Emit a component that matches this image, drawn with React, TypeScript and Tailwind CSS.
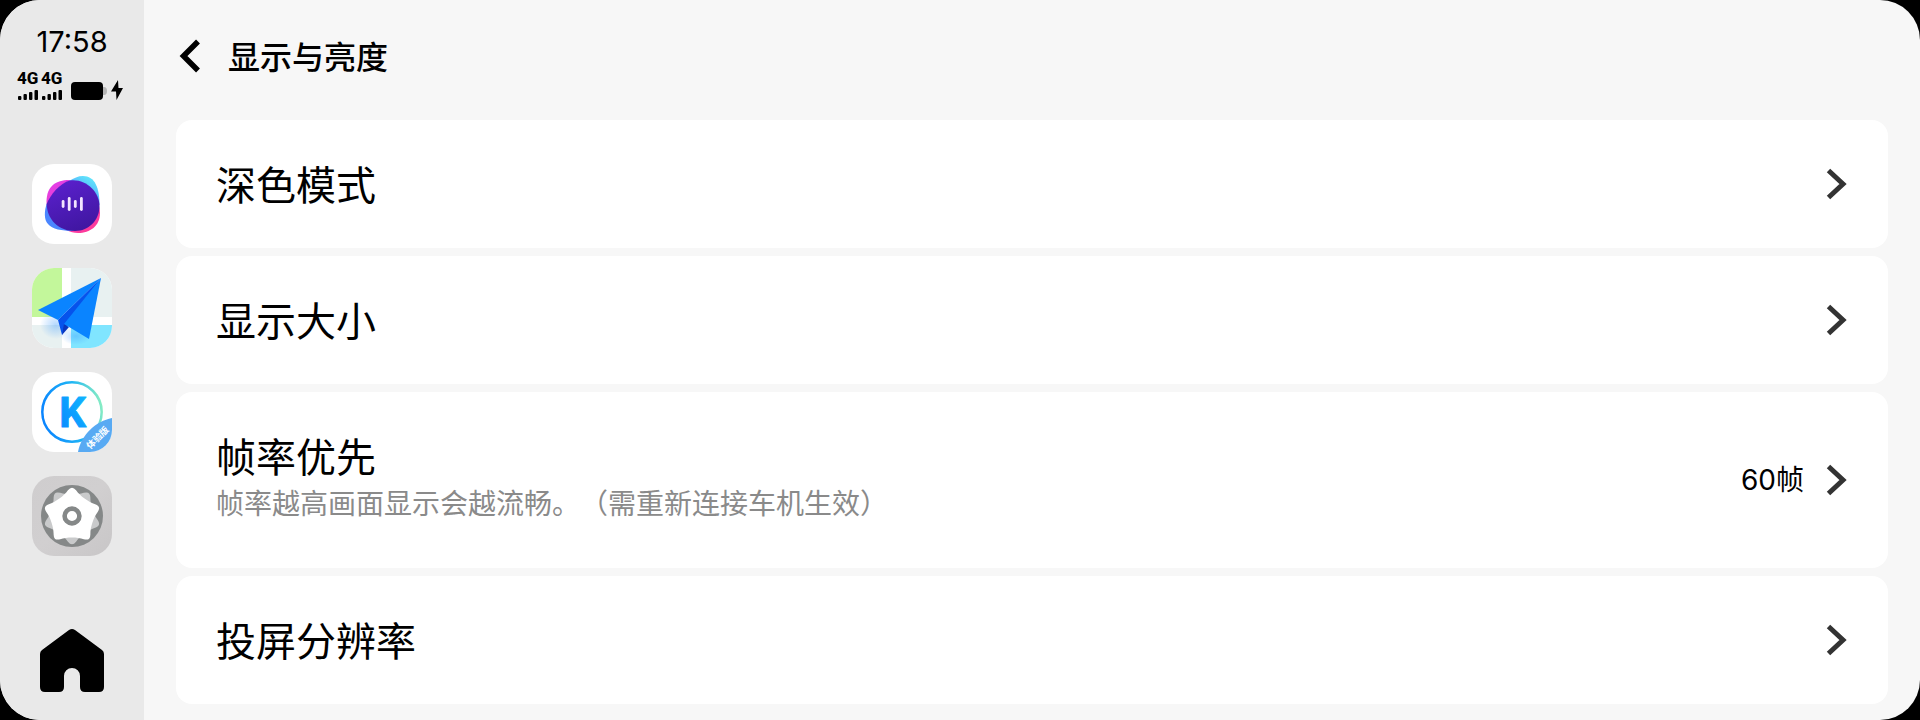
import React from "react";

const polar = (r: number, deg: number) => {
  const a = (deg * Math.PI) / 180;
  return `${(40 + r * Math.cos(a)).toFixed(2)} ${(40 + r * Math.sin(a)).toFixed(2)}`;
};

// five soft points joined by slightly hollow sides
const gearPath = (start: number) => {
  let d = `M${polar(26, start - 9)}`;
  for (let i = 0; i < 5; i++) {
    const a = start + i * 72;
    d += `Q${polar(31, a)} ${polar(26, a + 9)}`;
    d += `C${polar(21.5, a + 22)} ${polar(21.5, a + 50)} ${polar(26, a + 63)}`;
  }
  return d + "Z";
};

const VoiceIcon = () => (
  <svg viewBox="0 0 80 80" className="size-20" aria-hidden="true">
    <defs>
      <linearGradient id="voice-cyan" x1="0.8" y1="0" x2="0.2" y2="1">
        <stop offset="0" stopColor="#62effa" />
        <stop offset="1" stopColor="#4b7dff" />
      </linearGradient>
      <linearGradient id="voice-pink" x1="0.2" y1="0" x2="0.8" y2="1">
        <stop offset="0" stopColor="#e23fe8" />
        <stop offset="1" stopColor="#ff3a96" />
      </linearGradient>
      <linearGradient id="voice-core" x1="0.3" y1="0" x2="0.7" y2="1">
        <stop offset="0" stopColor="#5a20cc" />
        <stop offset="1" stopColor="#3f16a0" />
      </linearGradient>
    </defs>
    <rect width="80" height="80" fill="#fff" />
    <path
      d="M14.500 38C14.500 22 24 16 37 16C52 16 68 34 68 49C68 62 58 69 46 69C30 69 14.500 52 14.500 38Z"
      fill="url(#voice-pink)"
    />
    <path
      d="M15 39C12 47 12 56 16 60C20 65 30 67 41 67L40 40Z"
      fill="#4b86ff"
    />
    <path
      d="M37 17C42 14 46 12 51 12C63 12 67.500 24 67.500 41L40 40Z"
      fill="url(#voice-cyan)"
    />
    <path
      d="M14.700 40C18 31 28 19 38 16.500C54 14.500 67.500 28 67.500 42C67.500 56 57 67 43 67C27 67 15 56 14.700 40Z"
      fill="url(#voice-core)"
    />
    <g fill="#f3e4ff">
      <rect x="29.7" y="36" width="2.8" height="8" rx="1.4" />
      <rect x="35.8" y="33" width="2.8" height="14" rx="1.4" />
      <rect x="41.9" y="36" width="2.8" height="8" rx="1.4" />
      <rect x="48" y="33" width="2.8" height="14" rx="1.4" />
    </g>
  </svg>
);

const MapIcon = () => (
  <svg viewBox="0 0 80 80" className="size-20" aria-hidden="true">
    <defs>
      <radialGradient id="map-shade">
        <stop offset="0" stopColor="#3f9bff" stopOpacity="0.4" />
        <stop offset="1" stopColor="#3f9bff" stopOpacity="0" />
      </radialGradient>
    </defs>
    <rect width="80" height="80" fill="#fff" />
    <path d="M0 0H30V49H0Z" fill="#c3f79b" />
    <path d="M39 0H80V49H39ZM0 57H30V80H0Z" fill="#e8f1f1" />
    <path d="M39 57H80V80H39Z" fill="#80e5ff" />
    <ellipse cx="24" cy="57" rx="16" ry="14" fill="url(#map-shade)" />
    <ellipse cx="44" cy="68" rx="15" ry="9" fill="url(#map-shade)" />
    <path d="M69 10L6 42L26 52Z" fill="#0a84ff" />
    <path d="M69 10L26 52L30 67L35 58Z" fill="#0653ec" />
    <path d="M30 67L32 56L37 59Z" fill="#0a35bd" />
    <path d="M69 10L32 56L57 71Z" fill="#0a84ff" />
  </svg>
);

const KIcon = () => (
  <svg viewBox="0 0 80 80" className="size-20" aria-hidden="true">
    <defs>
      <linearGradient id="k-ring" x1="0" y1="0.6" x2="1" y2="0.4">
        <stop offset="0" stopColor="#0a84ff" />
        <stop offset="0.6" stopColor="#1fb6f5" />
        <stop offset="1" stopColor="#86ecc4" />
      </linearGradient>
      <linearGradient id="k-letter" x1="0" y1="1" x2="1" y2="0">
        <stop offset="0" stopColor="#0a84ff" />
        <stop offset="1" stopColor="#10baff" />
      </linearGradient>
    </defs>
    <rect width="80" height="80" fill="#fff" />
    <circle cx="40" cy="40" r="29.7" fill="none" stroke="url(#k-ring)" strokeWidth="2.5" />
    <text
      x="40.5"
      y="55"
      textAnchor="middle"
      fill="url(#k-letter)"
      stroke="url(#k-letter)"
      strokeLinejoin="round"
      className="font-['Roboto',sans-serif] text-[42px] font-bold"
    >
      K
    </text>
    <path d="M80 46C64 49 49 63 46 80H80Z" fill="#58aaf3" />
    <text
      transform="rotate(-45 65 65)"
      x="65"
      y="69"
      textAnchor="middle"
      fill="#fff"
      className="font-['Noto_Sans_CJK_SC',sans-serif] text-[9px] font-bold"
    >
      体验版
    </text>
  </svg>
);

const SettingsIcon = () => (
  <svg viewBox="0 0 80 80" className="size-20" aria-hidden="true">
    <defs>
      <linearGradient id="set-bg" x1="0" y1="0" x2="1" y2="1">
        <stop offset="0" stopColor="#cfcdce" />
        <stop offset="0.5" stopColor="#d1cfd0" />
        <stop offset="1" stopColor="#c8c6c7" />
      </linearGradient>
    </defs>
    <rect width="80" height="80" fill="url(#set-bg)" />
    <circle cx="40" cy="40" r="31" fill="#858888" />
    <path d={gearPath(90)} fill="#c9cacb" />
    <path d={gearPath(-90)} fill="#fff" />
    <circle cx="40" cy="40" r="7.4" fill="#fff" stroke="#858888" strokeWidth="4.6" />
  </svg>
);

const Signal = () => (
  <div className="flex w-6 flex-col gap-1">
    <span className="font-['Roboto',sans-serif] text-[17px] leading-4 font-extrabold">4G</span>
    <svg viewBox="0 0 20 10" className="ml-px h-[10px] w-5" aria-hidden="true">
      <rect x="0" y="6" width="3.4" height="4" rx="1" />
      <rect x="5.5" y="4" width="3.4" height="6" rx="1" />
      <rect x="11" y="2" width="3.4" height="8" rx="1" />
      <rect x="16.5" y="0" width="3.5" height="10" rx="1" />
    </svg>
  </div>
);

const StatusBar = () => (
  <div className="flex flex-col items-center">
    <time className="font-['Inter',sans-serif] text-[29px] leading-8">17:58</time>
    <div className="mt-3 flex items-end">
      <Signal />
      <Signal />
      <svg viewBox="0 0 36 18" className="ml-1.5 h-[18px] w-9" aria-hidden="true">
        <path d="M30 5H33Q36 5 36 9Q36 13 33 13H30Z" fill="#b5b5b5" />
        <rect width="32" height="18" rx="4" />
      </svg>
      <svg viewBox="0 0 12 20" className="mx-1 h-5 w-3" aria-hidden="true">
        <path d="M7 0L0 11.500H5L5.500 20L12 8H7.500Z" />
      </svg>
    </div>
  </div>
);

const apps = [
  { name: "语音", icon: <VoiceIcon /> },
  { name: "地图", icon: <MapIcon /> },
  { name: "K", icon: <KIcon /> },
  { name: "设置", icon: <SettingsIcon /> },
];

const Sidebar = () => (
  <aside className="flex w-36 shrink-0 flex-col items-center bg-[#e9e9e9] pt-[26px] pb-7">
    <StatusBar />
    <nav className="mt-16 mb-8 flex flex-col gap-6">
      {apps.map((app) => (
        <button key={app.name} aria-label={app.name} className="overflow-hidden rounded-[22px]">
          {app.icon}
        </button>
      ))}
    </nav>
    <button aria-label="主页" className="mt-auto">
      <svg viewBox="0 0 64 64" className="size-16" aria-hidden="true">
        <path d="M29 2Q32 0 35 2L62 22Q64 23.500 64 26V59Q64 64 59 64H45Q40 64 40 59V48A8 8 0 0 0 24 48V59Q24 64 19 64H5Q0 64 0 59V26Q0 23.500 2 22Z" />
      </svg>
    </button>
  </aside>
);

const rows = [
  { label: "深色模式" },
  { label: "显示大小" },
  {
    label: "帧率优先",
    hint: "帧率越高画面显示会越流畅。（需重新连接车机生效）",
    value: "60帧",
  },
  { label: "投屏分辨率" },
];

const App = () => {
  return (
    <div className="min-h-screen bg-black font-['Noto_Sans_CJK_SC',sans-serif] text-black">
      <div className="flex min-h-screen overflow-hidden rounded-[40px] bg-[#f7f7f7]">
        <Sidebar />
        <main className="flex-1 px-8 pb-4">
          <header className="flex h-[120px] items-start gap-7 pt-8">
            <button aria-label="返回" className="flex h-12 items-center">
              <svg viewBox="0 0 24 36" className="h-9 w-6" fill="none" aria-hidden="true">
                <path d="M22 3.500L7.500 18L22 32.500" stroke="#000" strokeWidth="5.5" />
              </svg>
            </button>
            <h1 className="text-[32px] leading-[46px] font-medium">显示与亮度</h1>
          </header>
          <div className="flex flex-col gap-2">
            {rows.map((row) => (
              <button
                key={row.label}
                className="flex w-full items-center rounded-2xl bg-white px-10 py-9 text-left"
              >
                <span className="flex flex-1 flex-col pb-0.5">
                  <span className="text-[40px] leading-[54px]">{row.label}</span>
                  {row.hint && (
                    <span className="pb-2 text-[28px] leading-10 text-[#8a8a8a] [text-spacing-trim:space-all]">
                      {row.hint}
                    </span>
                  )}
                </span>
                {row.value && (
                  <span className="mr-5 font-['Inter','Noto_Sans_CJK_SC',sans-serif] text-[28px] leading-10">
                    {row.value}
                  </span>
                )}
                <svg viewBox="0 0 24 32" className="h-8 w-6" fill="none" aria-hidden="true">
                  <path d="M4.500 2.500L19 16L4.500 29.500" stroke="#333" strokeWidth="5" />
                </svg>
              </button>
            ))}
          </div>
        </main>
      </div>
    </div>
  );
};

export default App;
